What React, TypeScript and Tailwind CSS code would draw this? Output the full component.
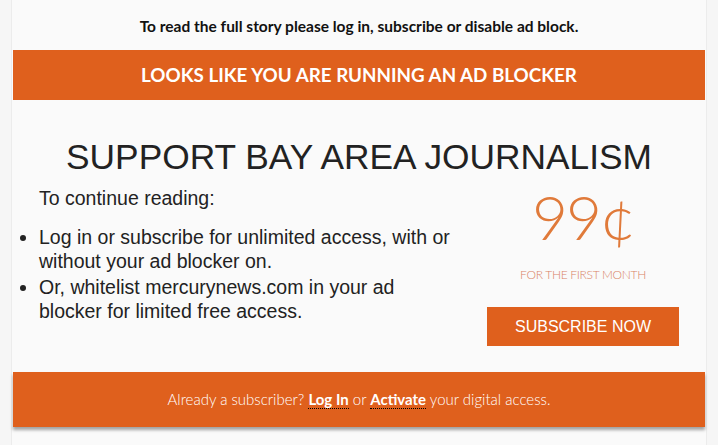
import React from "react";

export default function App() {
  return (
    <div className="w-[718px] h-[445px] bg-[#f6f6f6] px-[11px] overflow-hidden">
      <div className="h-full bg-[#fafafa] border-x border-[#ececec] px-[1px]">
        <div
          className="h-[50px] flex items-center justify-center text-[15.5px] font-bold text-[#111] pt-[4px]"
          style={{ fontFamily: "Lato, sans-serif" }}
        >
          To read the full story please log in, subscribe or disable ad block.
        </div>
        <div
          className="h-[50px] bg-[#df601d] flex items-center justify-center text-white text-[18.8px] font-bold uppercase"
          style={{ fontFamily: "Lato, sans-serif" }}
        >
          Looks like you are running an ad blocker
        </div>
        <div style={{ fontFamily: "'Liberation Sans', Arial, sans-serif" }}>
          <h1 className="text-center text-[35.3px] leading-[40px] text-[#222] pt-[37px]">
            SUPPORT BAY AREA JOURNALISM
          </h1>
          <div className="flex mt-[4px]">
            <div className="w-[474px] pl-[26px] text-[19.5px] leading-[24px] text-[#222]">
              <div className="w-[416px]">
                <p className="mt-[5px]">To continue reading:</p>
                <ul className="list-disc mt-[15px]" style={{ listStylePosition: "outside" }}>
                  <li>Log in or subscribe for unlimited access, with or without your ad blocker on.</li>
                  <li className="mt-[2px]">Or, whitelist mercurynews.com in your ad blocker for limited free access.</li>
                </ul>
              </div>
            </div>
            <div className="w-[192px] flex flex-col items-center">
              <div
                className="text-[62px] leading-[62px] font-light text-[#e07a3a] mt-[4px] tracking-[-2px]"
                style={{ fontFamily: "Lato, sans-serif" }}
              >
                99¢
              </div>
              <div
                className="text-[12px] font-light uppercase text-[#d98266] mt-[19px] tracking-[-0.3px]"
                style={{ fontFamily: "Lato, sans-serif" }}
              >
                For the first month
              </div>
              <button className="mt-[23px] w-[192px] h-[39px] bg-[#df601d] text-white text-[16px]">
                SUBSCRIBE NOW
              </button>
            </div>
          </div>
        </div>
        <div
          className="mt-[26px] h-[55px] bg-[#df601d] flex items-center justify-center text-white text-[15px] font-light shadow-[0_3px_3px_rgba(0,0,0,0.35)]"
          style={{ fontFamily: "Lato, sans-serif" }}
        >
          <span>
            Already a subscriber?{" "}
            <a className="font-bold border-b border-dotted border-black">Log In</a> or{" "}
            <a className="font-bold border-b border-dotted border-black">Activate</a> your digital access.
          </span>
        </div>
      </div>
    </div>
  );
}
